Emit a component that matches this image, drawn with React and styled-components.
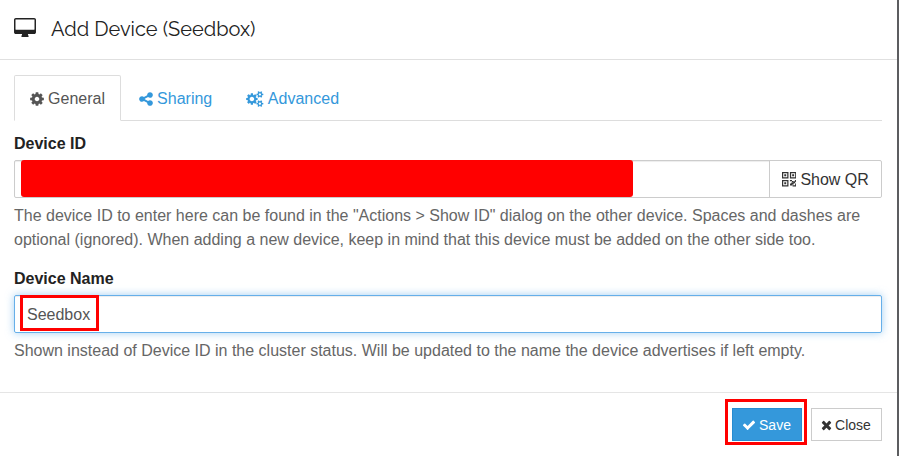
import React from "react";
import styled, { createGlobalStyle, css } from "styled-components";

const GlobalStyle = createGlobalStyle`
  *, *::before, *::after { box-sizing: border-box; }
  body { margin: 0; background: #5c5d60; font-family: "Liberation Sans", Arial, sans-serif; font-size: 16px; overflow: hidden; }
`;

const Dialog = styled.div`
  width: 897px;
  height: 456px;
  background: #fff;
  color: #222;
`;

const Header = styled.header`
  display: flex;
  align-items: center;
  gap: 15px;
  height: 60px;
  padding: 0 14px 2px;
  border-bottom: 1px solid #e0e0e0;
`;

const Title = styled.h4`
  margin: 0;
  font: 450 20px/24px Raleway, Lato, sans-serif;
`;

const Body = styled.main`
  height: 332px;
  padding: 15px 15px 0 14px;
`;

const Tabs = styled.nav`
  display: flex;
  height: 46px;
  margin-bottom: 13px;
  border-bottom: 1px solid #ddd;
`;

const Tab = styled.a`
  display: flex;
  align-items: center;
  gap: 4.1px;
  height: 46px;
  margin-right: 2px;
  padding: 1px 15px 0;
  border: 1px solid transparent;
  border-radius: 2px 2px 0 0;
  color: #3498db;
  ${({ $active }) => $active && css`
    color: #555;
    background: #fff;
    border-color: #ddd #ddd transparent;
  `}
`;

const Group = styled.section`
  margin-bottom: 17px;
`;

const Label = styled.label`
  display: block;
  height: 26px;
  font-weight: 700;
  line-height: 19px;
`;

const Field = styled.div`
  position: relative;
  display: flex;
  height: 38px;
  border: 1px solid ${({ $focused }) => ($focused ? "#66afe9" : "#ccc")};
  border-radius: 2px;
  box-shadow: inset 0 1px 1px rgba(0, 0, 0, 0.075)${({ $focused }) => ($focused ? ", 0 0 8px rgba(102, 175, 233, 0.6)" : "")};
`;

const Value = styled.span`
  flex: 1;
  padding: 0 12px;
  color: #555;
  line-height: 37px;
`;

const QrButton = styled.button`
  display: flex;
  align-items: center;
  gap: 4px;
  width: 112px;
  padding: 1px 0 0 12px;
  border: 0;
  border-left: 1px solid #ccc;
  border-radius: 0 2px 2px 0;
  background: #fff;
  color: #333;
  font: inherit;
  white-space: nowrap;
`;

const Redaction = styled.div`
  position: absolute;
  top: -1px;
  left: 6px;
  width: 612px;
  height: 37px;
  border-radius: 3px;
  background: #f00;
`;

const Highlight = styled.div`
  position: absolute;
  border: 3px solid #f00;
`;

const NameHighlight = styled(Highlight)`
  top: -1px;
  left: 5px;
  width: 79px;
  height: 36px;
`;

const SaveHighlight = styled(Highlight)`
  top: -9px;
  left: -7px;
  width: 82px;
  height: 46px;
`;

const Help = styled.p`
  margin: 0;
  padding-top: 6px;
  color: #666;
  line-height: 24px;
  white-space: nowrap;
`;

const Footer = styled.footer`
  display: flex;
  justify-content: flex-end;
  gap: 9px;
  height: 64px;
  padding: 15px 15px 0;
  border-top: 1px solid #e5e5e5;
`;

const SaveSlot = styled.div`
  position: relative;
`;

const Button = styled.button`
  display: flex;
  align-items: center;
  justify-content: center;
  gap: 3px;
  width: ${({ $primary }) => ($primary ? 70 : 71)}px;
  height: 33px;
  padding: 1px 1px 0 0;
  border: 1px solid ${({ $primary }) => ($primary ? "#258cd1" : "#ccc")};
  background: ${({ $primary }) => ($primary ? "#3498db" : "#fff")};
  color: ${({ $primary }) => ($primary ? "#fff" : "#333")};
  font: 14px "Liberation Sans", Arial, sans-serif;
`;

const Glyph = styled.svg`
  flex: none;
  fill: currentColor;
`;

const icons = {
  desktop: ["-64 0 1920 1792", "M1728 992v-832q0-13-9.500-22.500t-22.500-9.500h-1600q-13 0-22.500 9.500t-9.500 22.500v832q0 13 9.500 22.500t22.500 9.500h1600q13 0 22.500-9.500t9.500-22.500zm128-832v1088q0 66-47 113t-113 47h-544q0 37 16 77.500t32 71 16 43.500q0 26-19 45t-45 19h-512q-26 0-45-19t-19-45q0-14 16-44t32-70 16-78h-544q-66 0-113-47t-47-113v-1088q0-66 47-113t113-47h1600q66 0 113 47t47 113z"],
  cog: ["0 0 1536 1792", "M1024 896q0-106-75-181t-181-75-181 75-75 181 75 181 181 75 181-75 75-181zm512-109v222q0 12-8 23t-20 13l-185 28q-19 54-39 91 35 50 107 138 10 12 10 25t-9 23q-27 37-99 108t-94 71q-12 0-26-9l-138-108q-44 23-91 38-16 136-29 186-7 28-36 28h-222q-14 0-24.500-8.500t-11.500-21.500l-28-184q-49-16-90-37l-141 107q-10 9-25 9-14 0-25-11-126-114-165-168-7-10-7-23 0-12 8-23 15-21 51-66.500t54-70.500q-27-50-41-99l-183-27q-13-2-21-12.500t-8-23.500v-222q0-12 8-23t19-13l186-28q14-46 39-92-40-57-107-138-10-12-10-24 0-10 9-23 26-36 98.500-107.500t94.500-71.500q13 0 26 10l138 107q44-23 91-38 16-136 29-186 7-28 36-28h222q14 0 24.500 8.500t11.500 21.500l28 184q49 16 90 37l142-107q9-9 24-9 13 0 25 10 129 119 165 170 7 8 7 22 0 12-8 23-15 21-51 66.500t-54 70.500q26 50 41 98l183 28q13 2 21 12.500t8 23.500z"],
  share: ["0 0 1536 1792", "M1216 1024q133 0 226.500 93.500t93.500 226.500-93.500 226.500-226.500 93.500-226.500-93.500-93.500-226.500q0-12 2-34l-360-180q-92 86-218 86-133 0-226.500-93.500t-93.500-226.500 93.500-226.500 226.500-93.500q126 0 218 86l360-180q-2-22-2-34 0-133 93.500-226.500t226.500-93.500 226.500 93.500 93.500 226.500-93.500 226.500-226.500 93.500q-126 0-218-86l-360 180q2 22 2 34t-2 34l360 180q92-86 218-86z"],
  cogs: ["0 0 1920 1792", "M896 896q0-106-75-181t-181-75-181 75-75 181 75 181 181 75 181-75 75-181zm768 512q0-52-38-90t-90-38-90 38-38 90q0 53 37.500 90.500t90.500 37.500 90.500-37.500 37.500-90.500zm0-1024q0-52-38-90t-90-38-90 38-38 90q0 53 37.500 90.500t90.500 37.500 90.500-37.500 37.500-90.500zm-384 421v185q0 10-7 19.500t-16 10.500l-155 24q-11 35-32 76 34 48 90 115 7 11 7 20 0 12-7 19-23 30-82.500 89.500t-78.500 59.500q-11 0-21-7l-115-90q-37 19-77 31-11 108-23 155-7 24-30 24h-186q-11 0-20-7.500t-10-17.500l-23-153q-34-10-75-31l-118 89q-7 7-20 7-11 0-21-8-144-133-144-160 0-9 7-19 10-14 41-53t47-61q-23-44-35-82l-152-24q-10-1-17-9.500t-7-19.500v-185q0-10 7-19.500t16-10.500l155-24q11-35 32-76-34-48-90-115-7-11-7-20 0-12 7-20 22-30 82-89t79-59q11 0 21 7l115 90q34-18 77-32 11-108 23-154 7-24 30-24h186q11 0 20 7.500t10 17.500l23 153q34 10 75 31l118-89q8-7 20-7 11 0 21 8 144 133 144 160 0 8-7 19-12 16-42 54t-45 60q23 48 34 82l152 23q10 2 17 10.500t7 19.500zm640 533v140q0 16-149 31-12 27-30 52 51 113 51 138 0 4-4 7-122 71-124 71-8 0-46-47t-52-68q-20 2-30 2t-30-2q-14 21-52 68t-46 47q-2 0-124-71-4-3-4-7 0-25 51-138-18-25-30-52-149-15-149-31v-140q0-16 149-31 13-29 30-52-51-113-51-138 0-4 4-7 4-2 35-20t59-34 30-16q8 0 46 46.500t52 67.500q20-2 30-2t30 2q51-71 92-112l6-2q4 0 124 70 4 3 4 7 0 25-51 138 17 23 30 52 149 15 149 31zm0-1024v140q0 16-149 31-12 27-30 52 51 113 51 138 0 4-4 7-122 71-124 71-8 0-46-47t-52-68q-20 2-30 2t-30-2q-14 21-52 68t-46 47q-2 0-124-71-4-3-4-7 0-25 51-138-18-25-30-52-149-15-149-31v-140q0-16 149-31 13-29 30-52-51-113-51-138 0-4 4-7 4-2 35-20t59-34 30-16q8 0 46 46.500t52 67.500q20-2 30-2t30 2q51-71 92-112l6-2q4 0 124 70 4 3 4 7 0 25-51 138 17 23 30 52 149 15 149 31z"],
  qr: ["0 0 14 14", "M0 0h6.300v6.300h-6.300zM1.200 1.200v3.900h3.900v-3.900zM2.200 2.200h1.900v1.900h-1.900zM7.700 0h6.300v6.300h-6.300zM8.900 1.200v3.900h3.900v-3.900zM9.900 2.200h1.900v1.900h-1.900zM0 7.700h6.300v6.300h-6.300zM1.200 8.900v3.900h3.900v-3.900zM2.200 9.900h1.900v1.900h-1.900zM7.700 7.700h2v1h1.200v1.200h-1.200v-.8h-2zM12.200 7.700h1.800v2h-1.200v1.200h-1.400v1.200h-1.300v1h-2.300v-2h1.200v-1h2v-1.200h2.200zM12.800 11.200h1.200v2.800h-3.700v-1.200h2.500z"],
  check: ["0 0 1792 1792", "M1671 566q0 40-28 68l-724 724-136 136q-28 28-68 28t-68-28l-136-136-362-362q-28-28-28-68t28-68l136-136q28-28 68-28t68 28l294 295 656-657q28-28 68-28t68 28l136 136q28 28 28 68z"],
  close: ["192 0 1408 1792", "M1490 1322q0 40-28 68l-136 136q-28 28-68 28t-68-28l-294-294-294 294q-28 28-68 28t-68-28l-136-136q-28-28-28-68t28-68l294-294-294-294q-28-28-28-68t28-68l136-136q28-28 68-28t68 28l294 294 294-294q28-28 68-28t68 28l136 136q28 28 28 68t-28 68l-294 294 294 294q28 28 28 68z"],
};

function Icon({ name, width, height }) {
  const [viewBox, path] = icons[name];
  return (
    <Glyph viewBox={viewBox} width={width} height={height} aria-hidden="true">
      <path d={path} fillRule={name === "qr" ? "evenodd" : "nonzero"} />
    </Glyph>
  );
}

export default function App() {
  return (
    <>
      <GlobalStyle />
      <Dialog role="dialog">
        <Header>
          <Icon name="desktop" width={22} height={20.5} />
          <Title>Add Device (Seedbox)</Title>
        </Header>
        <Body>
          <Tabs>
            <Tab $active><Icon name="cog" width={14} height={16} />General</Tab>
            <Tab><Icon name="share" width={14} height={16} />Sharing</Tab>
            <Tab><Icon name="cogs" width={17.5} height={16} />Advanced</Tab>
          </Tabs>
          <Group>
            <Label>Device ID</Label>
            <Field>
              <Value />
              <Redaction />
              <QrButton><Icon name="qr" width={14.4} height={14.4} />Show QR</QrButton>
            </Field>
            <Help>
              The device ID to enter here can be found in the "Actions &gt; Show ID" dialog on the other device. Spaces and dashes are
              <br />
              optional (ignored). When adding a new device, keep in mind that this device must be added on the other side too.
            </Help>
          </Group>
          <Group>
            <Label>Device Name</Label>
            <Field $focused>
              <Value>Seedbox</Value>
              <NameHighlight />
            </Field>
            <Help>Shown instead of Device ID in the cluster status. Will be updated to the name the device advertises if left empty.</Help>
          </Group>
        </Body>
        <Footer>
          <SaveSlot>
            <Button $primary><Icon name="check" width={14} height={14} />Save</Button>
            <SaveHighlight />
          </SaveSlot>
          <Button><Icon name="close" width={11} height={14} />Close</Button>
        </Footer>
      </Dialog>
    </>
  );
}
